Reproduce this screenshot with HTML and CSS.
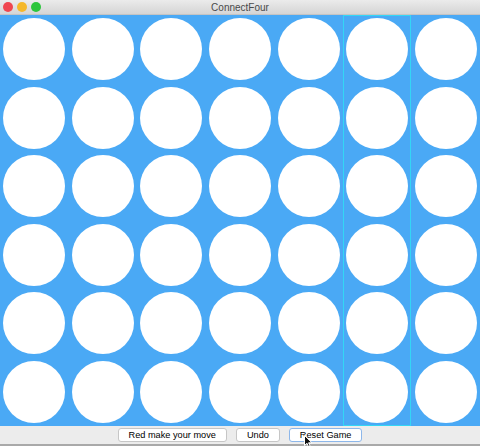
FILE: index.html
```html
<!DOCTYPE html>
<html lang="en">
<head>
    <meta charset="UTF-8">
    <meta name="viewport" content="width=device-width, initial-scale=1.0">
    <title>ConnectFour</title>
    <link rel="stylesheet" href="styles.css">
</head>
<body>
    <div class="window">
        <div class="titlebar">
            <div class="lights">
                <span class="light red"></span>
                <span class="light yellow"></span>
                <span class="light green"></span>
            </div>
            <div class="title">ConnectFour</div>
        </div>
        <div class="board" id="board"></div>
        <div class="controls">
            <button class="btn">Red make your move</button>
            <button class="btn">Undo</button>
            <button class="btn focused">Reset Game
                <svg class="cursor" width="9" height="13" viewBox="0 0 9 13">
                    <path d="M0.5 0.5 L0.5 10.5 L3 8.3 L4.8 12.3 L6.3 11.6 L4.6 7.8 L8 7.8 Z" fill="#111" stroke="#fff" stroke-width="1"/>
                </svg>
            </button>
        </div>
    </div>
    <script>
        var board = document.getElementById('board');
        for (var c = 0; c < 7; c++) {
            var col = document.createElement('div');
            col.className = c === 5 ? 'column active' : 'column';
            for (var r = 0; r < 6; r++) {
                var cell = document.createElement('div');
                cell.className = 'cell';
                var disc = document.createElement('div');
                disc.className = 'disc';
                cell.appendChild(disc);
                col.appendChild(cell);
            }
            board.appendChild(col);
        }
    </script>
</body>
</html>
```

FILE: styles.css
```css
body {
    margin: 0;
    font-family: "Liberation Sans", Arial, sans-serif;
    background: #ececec;
}

.window {
    width: 480px;
    height: 446px;
    display: flex;
    flex-direction: column;
    overflow: hidden;
}

.titlebar {
    height: 15px;
    flex: none;
    position: relative;
    display: flex;
    align-items: center;
    justify-content: center;
    background: linear-gradient(#ebebeb, #d5d5d5);
    border-bottom: 1px solid #c4c4c4;
    box-sizing: border-box;
}

.lights {
    position: absolute;
    left: 3px;
    top: 2px;
    display: flex;
    gap: 4px;
}

.light {
    width: 10px;
    height: 10px;
    border-radius: 50%;
}

.red { background: #f0464f; }
.yellow { background: #f5b82a; }
.green { background: #2cc53c; }

.title {
    font-size: 10px;
    color: #4a4a4a;
}

.board {
    height: 411px;
    flex: none;
    display: grid;
    grid-template-columns: repeat(7, 1fr);
    background: #4aa9f5;
}

.column {
    display: flex;
    flex-direction: column;
}

.column.active {
    box-shadow: inset 0 0 0 1px #33d6f5;
}

.cell {
    flex: 1;
    display: flex;
    align-items: center;
    justify-content: center;
}

.disc {
    width: 62px;
    height: 62px;
    border-radius: 50%;
    background: #ffffff;
}

.controls {
    flex: 1;
    display: flex;
    justify-content: center;
    align-items: flex-start;
    gap: 9px;
    padding-top: 2px;
    border-bottom: 2px solid #a9a9a9;
}

.btn {
    position: relative;
    height: 14px;
    padding: 0 10px;
    font-family: "Liberation Sans", Arial, sans-serif;
    font-size: 9.2px;
    color: #000;
    background: #ffffff;
    border: 1px solid #c6c6c6;
    border-radius: 3px;
    line-height: 12px;
}

.btn.focused {
    border-color: #8db7ea;
}

.cursor {
    position: absolute;
    left: 14px;
    top: 6px;
}
```
